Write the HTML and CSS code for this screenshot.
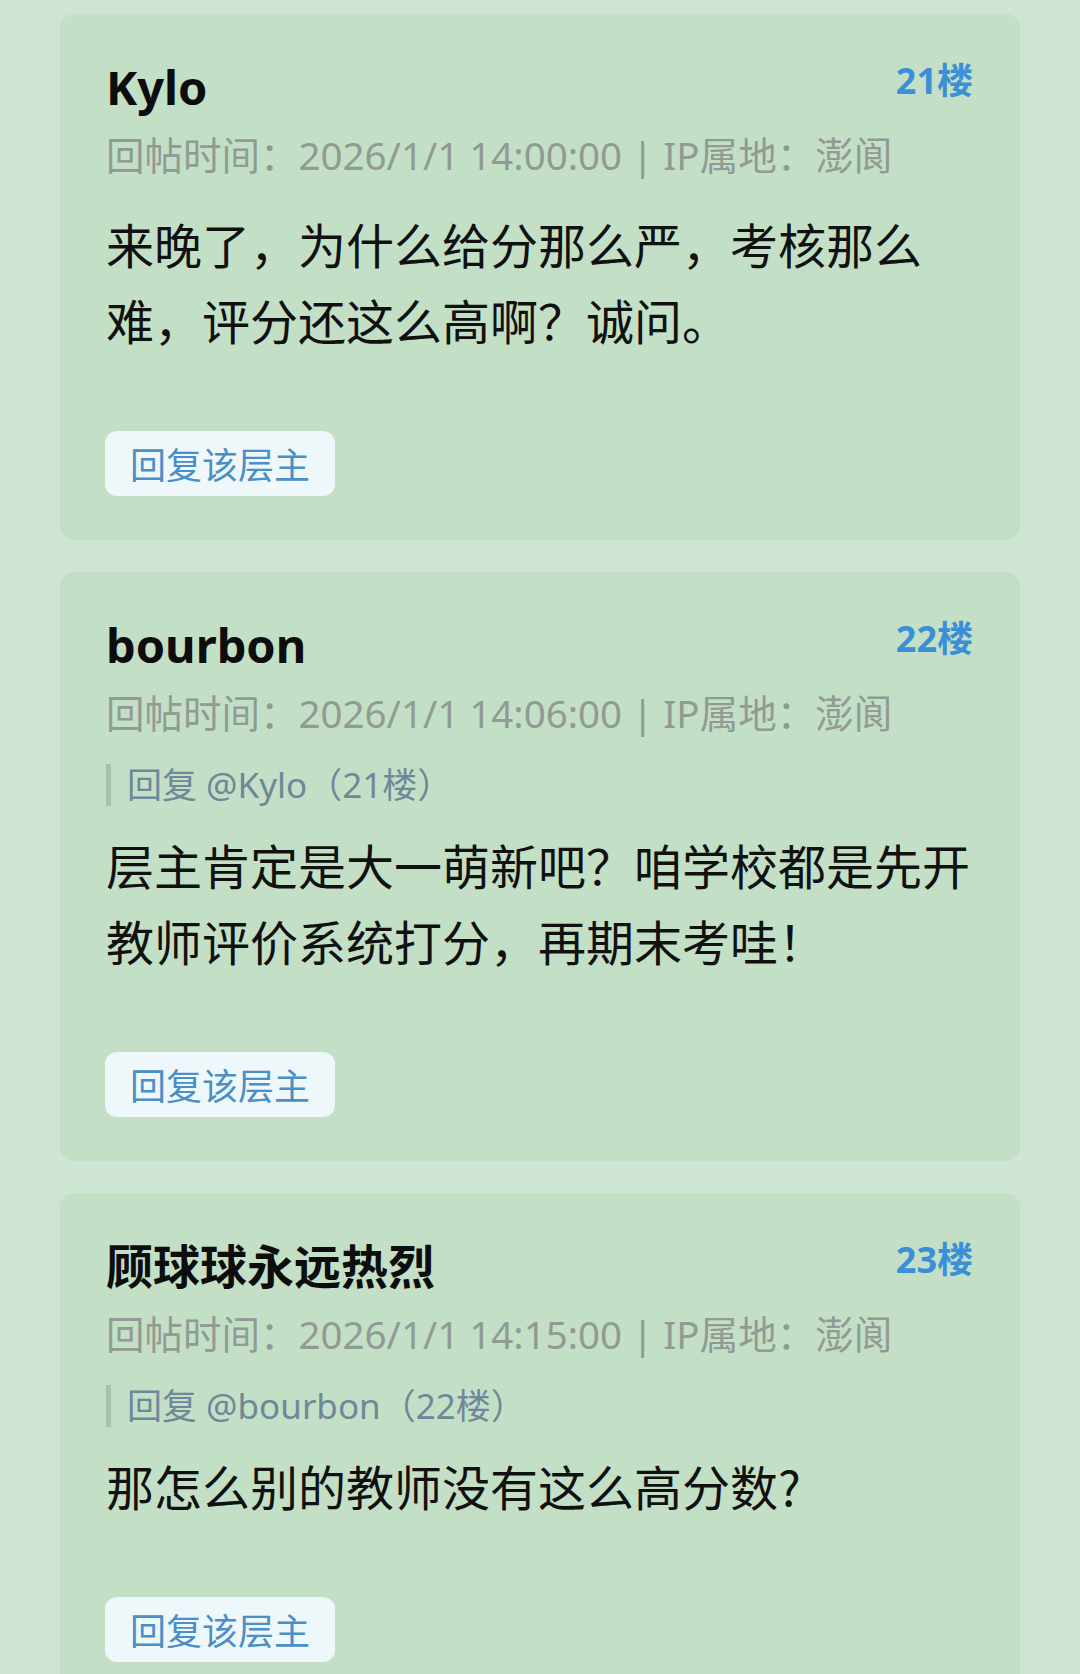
FILE: index.html
```html
<!DOCTYPE html>
<html lang="zh-CN">
<head>
<meta charset="utf-8">
<title>回帖</title>
<link rel="stylesheet" href="styles.css">
</head>
<body>
<main class="thread">
  <article class="post">
    <header class="post-head">
      <div class="name">Kylo</div>
      <div class="floor">21楼</div>
    </header>
    <div class="meta">回帖时间：2026/1/1 14:00:00 | IP属地：澎阆</div>
    <p class="content">来晚了，为什么给分那么严，考核那么难，评分还这么高啊？诚问。</p>
    <button class="reply-btn">回复该层主</button>
  </article>

  <article class="post">
    <header class="post-head">
      <div class="name">bourbon</div>
      <div class="floor">22楼</div>
    </header>
    <div class="meta">回帖时间：2026/1/1 14:06:00 | IP属地：澎阆</div>
    <div class="quote">回复 @Kylo（21楼）</div>
    <p class="content">层主肯定是大一萌新吧？咱学校都是先开教师评价系统打分，再期末考哇！</p>
    <button class="reply-btn">回复该层主</button>
  </article>

  <article class="post">
    <header class="post-head">
      <div class="name">顾球球永远热烈</div>
      <div class="floor">23楼</div>
    </header>
    <div class="meta">回帖时间：2026/1/1 14:15:00 | IP属地：澎阆</div>
    <div class="quote">回复 @bourbon（22楼）</div>
    <p class="content">那怎么别的教师没有这么高分数?</p>
    <button class="reply-btn">回复该层主</button>
  </article>
</main>
</body>
</html>
```

FILE: styles.css
```css
html, body {
  margin: 0;
  padding: 0;
  background: #cee5d3;
}

body {
  font-family: "Noto Sans", "Noto Sans CJK SC", sans-serif;
  color: #111;
}

.thread {
  display: flex;
  flex-direction: column;
  gap: 32px;
  padding: 14px 60px 0 60px;
}

.post {
  background: #c3e0c7;
  border-radius: 14px;
  padding: 45px 47px 44px 46px;
  display: flex;
  flex-direction: column;
  align-items: flex-start;
}

.post-head {
  align-self: stretch;
  display: flex;
  justify-content: space-between;
  align-items: flex-start;
}

.name {
  font-size: 47px;
  line-height: 56px;
  height: 56px;
  font-weight: 700;
  color: #0d0d0d;
}

.floor {
  font-size: 36px;
  line-height: 44px;
  font-weight: 700;
  color: #3b8fd6;
}

.meta {
  margin-top: 16px;
  font-size: 38.5px;
  line-height: 48px;
  height: 48px;
  color: #919a93;
  white-space: nowrap;
}

.quote {
  margin-top: 27px;
  height: 42px;
  line-height: 42px;
  font-size: 35px;
  color: #6f8899;
  border-left: 5px solid #a8c1ac;
  padding-left: 16px;
  white-space: nowrap;
}

.quote + .content {
  margin-top: 20px;
}

.content {
  margin: 26px 0 0 0;
  align-self: stretch;
  font-family: "Noto Sans CJK SC", sans-serif;
  font-size: 48px;
  line-height: 76px;
  color: #111;
}

.reply-btn {
  margin-top: 74px;
  margin-left: -1px;
  height: 65px;
  padding: 0 25px;
  border: none;
  border-radius: 12px;
  background: #eef8fb;
  color: #4a8fc6;
  font-family: "Noto Sans CJK SC", sans-serif;
  font-size: 36px;
  line-height: 65px;
}
```
